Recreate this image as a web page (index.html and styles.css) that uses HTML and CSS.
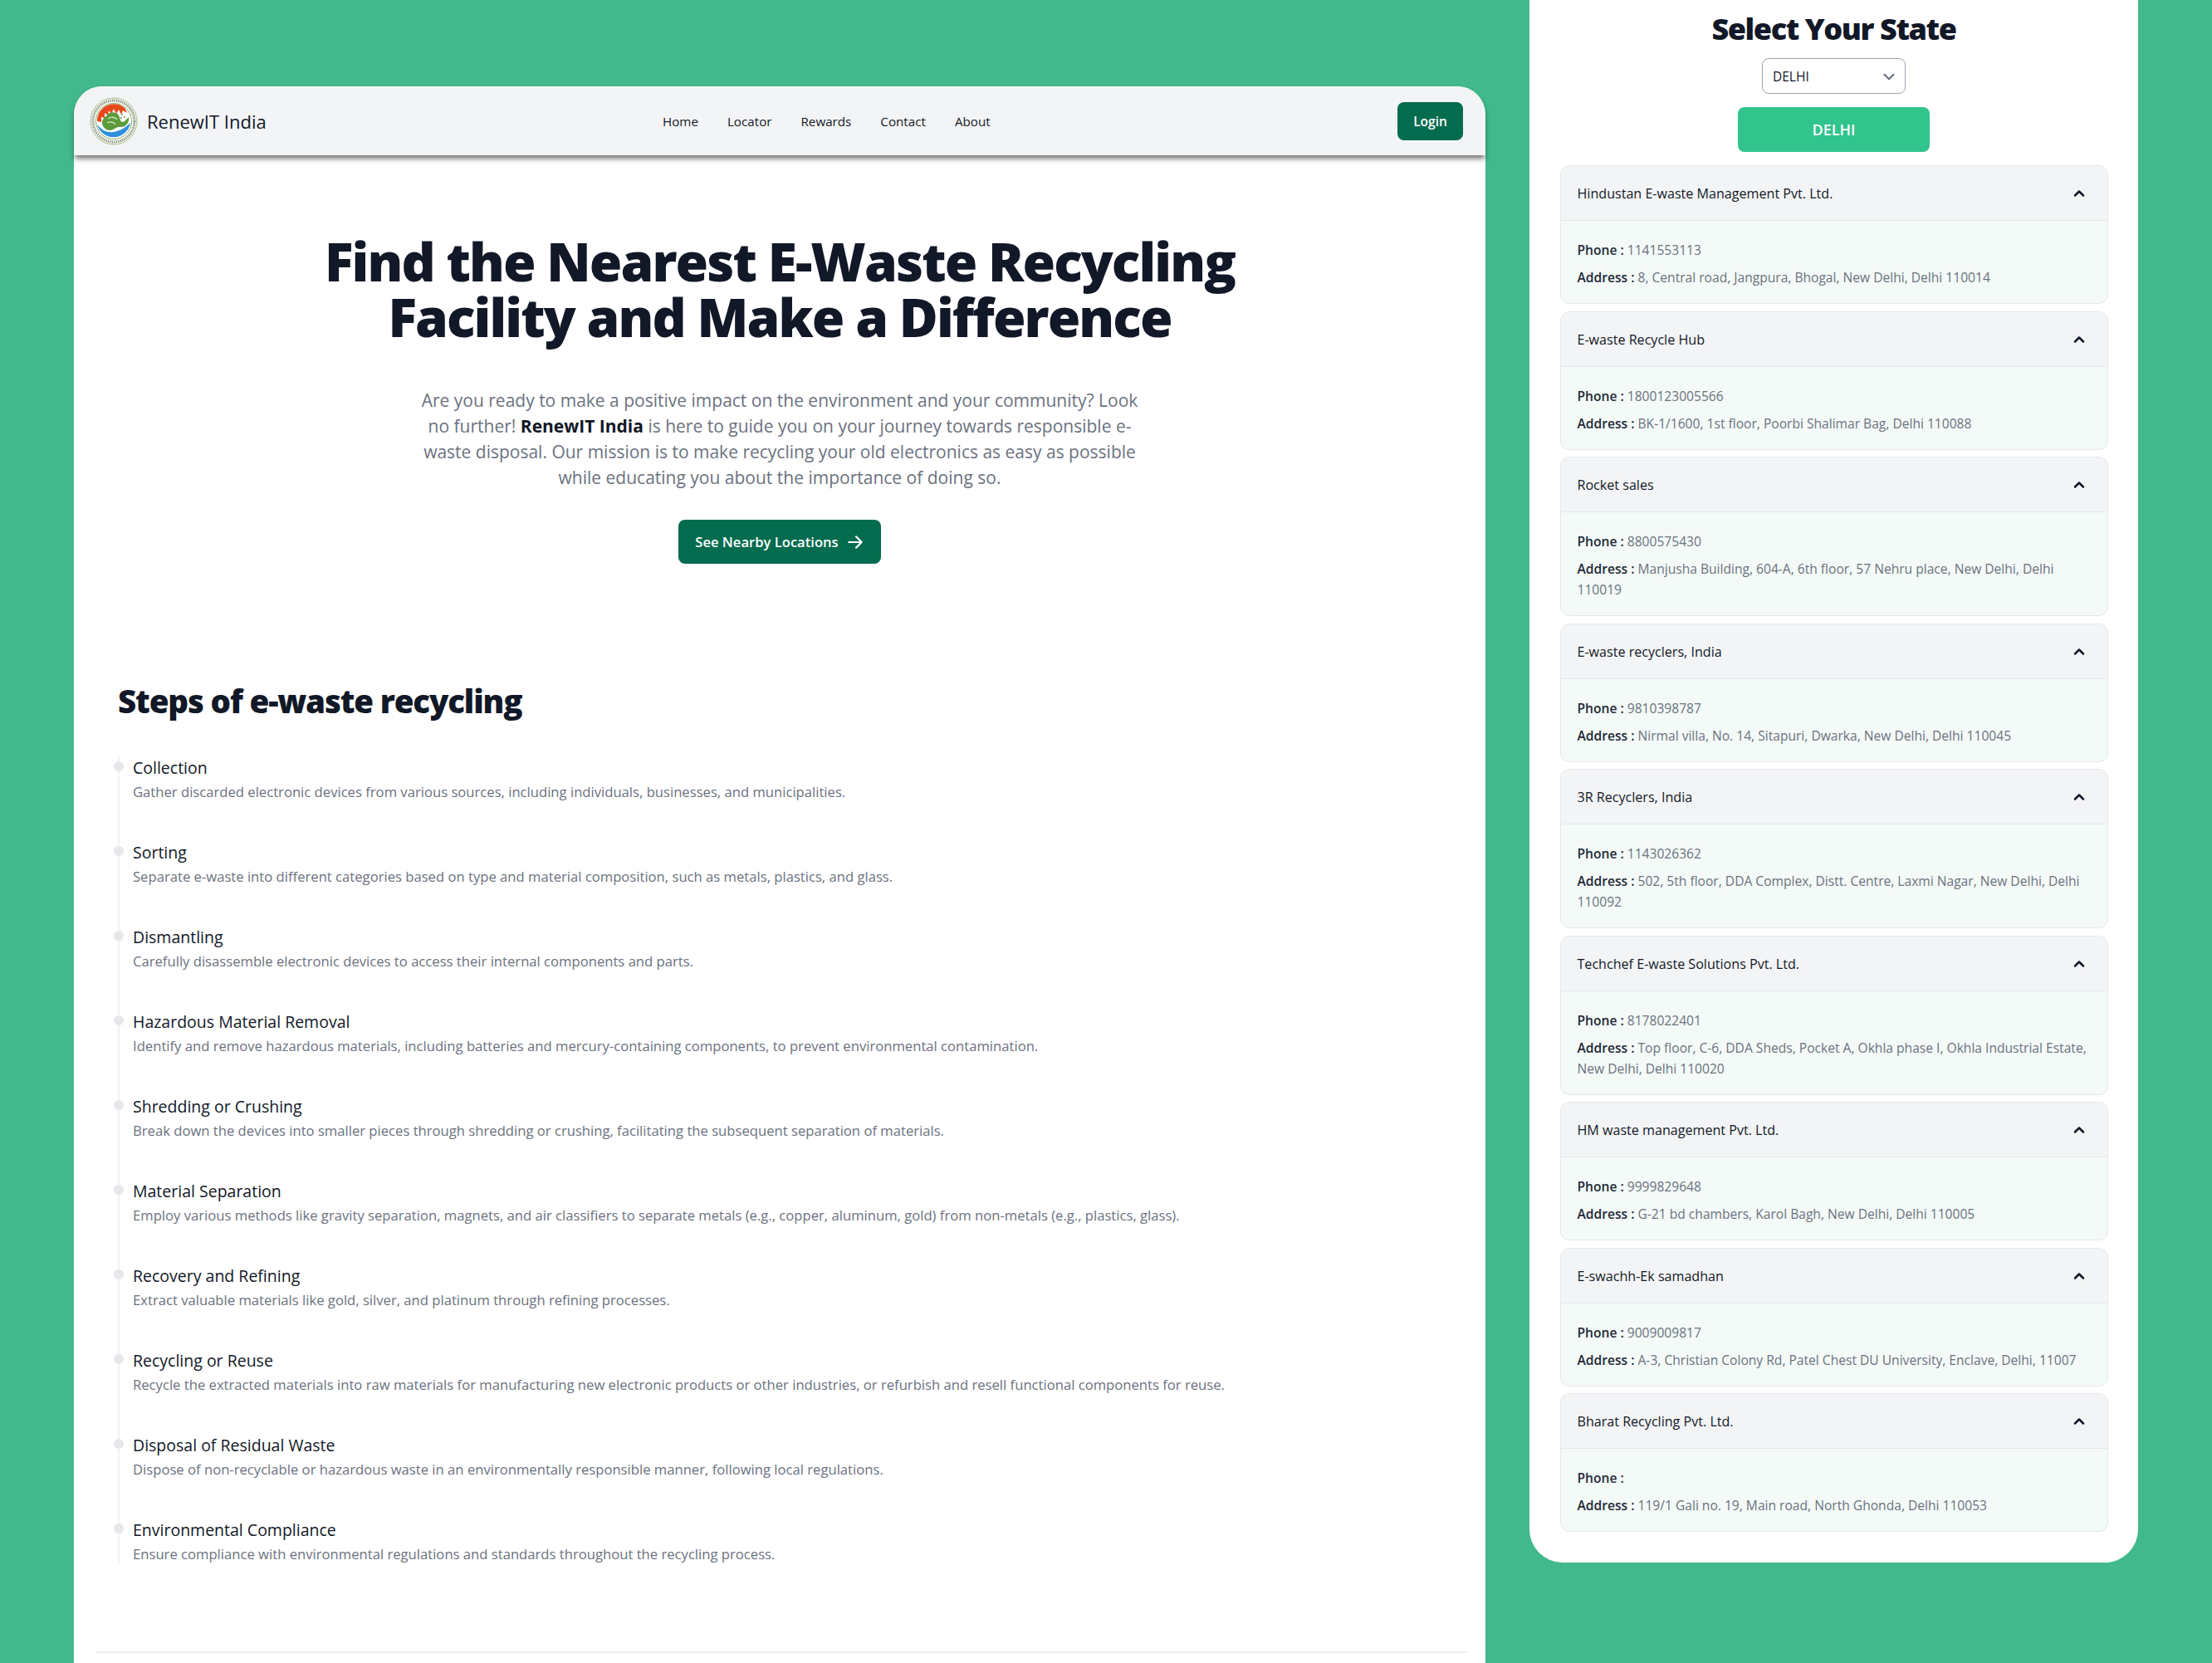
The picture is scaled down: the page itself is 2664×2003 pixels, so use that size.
FILE: index.html
```html
<!DOCTYPE html>
<html lang="en">
<head>
<meta charset="utf-8">
<title>RenewIT India</title>
<link rel="stylesheet" href="styles.css">
</head>
<body>
<div class="page">
  <main class="left">
    <nav class="navbar">
      <a class="brand">
        <svg class="logo" viewBox="0 0 60 64" aria-hidden="true">
          <circle cx="30" cy="32" r="28" fill="#f6f7f3" stroke="#a9c08e" stroke-width="1"/>
          <circle cx="30" cy="32" r="25" fill="none" stroke="#5f6b4c" stroke-width="3" stroke-dasharray="1.3 1.2" opacity=".75"/>
          <circle cx="30" cy="32" r="21.5" fill="#fff" stroke="#8fb070" stroke-width="1"/>
          <path d="M10 32 A20 20 0 0 1 44 17 L46 22 L41 19 L39 24 L36 18 L33 23 L30 17 L27 23 L24 19 L23 25 L19 22 L19 28 L15 27 L15 33 Z" fill="#e8481c"/>
          <path d="M10 36 C14 40 17 44 24 45 C32 46 42 42 50 34 A20.5 20.5 0 0 1 10 36 Z" fill="#2f8fdd"/>
          <path d="M17 38 C14 32 18 27 21 26 C24 20 33 20 36 25 C38 28 37 31 40 33 C43 33 46 29 48 27 C49 33 45 39 39 39 C34 38 31 42 26 43 C22 43 19 41 17 38 Z" fill="#5d9a3c"/>
          <path d="M23 29 C27 26 32 27 34 30 M22 34 C26 32 30 33 32 36" fill="none" stroke="#d7e8c0" stroke-width="1.3"/>
          <circle cx="40" cy="24" r="1" fill="#5d9a3c"/><circle cx="43" cy="27" r="1" fill="#5d9a3c"/><circle cx="39" cy="28" r="1" fill="#5d9a3c"/>
        </svg>
        <span class="brand-name">RenewIT India</span>
      </a>
      <ul class="nav-links">
        <li>Home</li><li>Locator</li><li>Rewards</li><li>Contact</li><li>About</li>
      </ul>
      <button class="btn btn-login">Login</button>
    </nav>

    <section class="hero">
      <h1>Find the Nearest E-Waste Recycling<br>Facility and Make a Difference</h1>
      <p>Are you ready to make a positive impact on the environment and your community? Look no further! <strong>RenewIT India</strong> is here to guide you on your journey towards responsible e-waste disposal. Our mission is to make recycling your old electronics as easy as possible while educating you about the importance of doing so.</p>
      <button class="btn btn-hero">See Nearby Locations
        <svg class="arrow" viewBox="0 0 20 20" aria-hidden="true"><path d="M3 10h14M11 4l6 6-6 6" fill="none" stroke="currentColor" stroke-width="2" stroke-linecap="round" stroke-linejoin="round"/></svg>
      </button>
    </section>

    <section class="steps">
      <h2>Steps of e-waste recycling</h2>
      <ol class="timeline">
        <li><h3>Collection</h3><p>Gather discarded electronic devices from various sources, including individuals, businesses, and municipalities.</p></li>
        <li><h3>Sorting</h3><p>Separate e-waste into different categories based on type and material composition, such as metals, plastics, and glass.</p></li>
        <li><h3>Dismantling</h3><p>Carefully disassemble electronic devices to access their internal components and parts.</p></li>
        <li><h3>Hazardous Material Removal</h3><p>Identify and remove hazardous materials, including batteries and mercury-containing components, to prevent environmental contamination.</p></li>
        <li><h3>Shredding or Crushing</h3><p>Break down the devices into smaller pieces through shredding or crushing, facilitating the subsequent separation of materials.</p></li>
        <li><h3>Material Separation</h3><p>Employ various methods like gravity separation, magnets, and air classifiers to separate metals (e.g., copper, aluminum, gold) from non-metals (e.g., plastics, glass).</p></li>
        <li><h3>Recovery and Refining</h3><p>Extract valuable materials like gold, silver, and platinum through refining processes.</p></li>
        <li><h3>Recycling or Reuse</h3><p>Recycle the extracted materials into raw materials for manufacturing new electronic products or other industries, or refurbish and resell functional components for reuse.</p></li>
        <li><h3>Disposal of Residual Waste</h3><p>Dispose of non-recyclable or hazardous waste in an environmentally responsible manner, following local regulations.</p></li>
        <li><h3>Environmental Compliance</h3><p>Ensure compliance with environmental regulations and standards throughout the recycling process.</p></li>
      </ol>
    </section>
    <hr class="rule">
  </main>

  <aside class="right">
    <h2 class="state-title">Select Your State</h2>
    <div class="select"><span>DELHI</span>
      <svg class="select-chev" viewBox="0 0 20 20" aria-hidden="true"><path d="M5 8l5 5 5-5" fill="none" stroke="#6b7280" stroke-width="2" stroke-linecap="round" stroke-linejoin="round"/></svg>
    </div>
    <div class="state-btn">DELHI</div>
    <div class="accordion">
      <article class="item"><header><span>Hindustan E-waste Management Pvt. Ltd.</span><svg class="chev" viewBox="0 0 20 20"><path d="M5 12.5l5-5 5 5" /></svg></header><div class="body"><p><b>Phone :</b> 1141553113</p><p><b>Address :</b> 8, Central road, Jangpura, Bhogal, New Delhi, Delhi 110014</p></div></article>
      <article class="item"><header><span>E-waste Recycle Hub</span><svg class="chev" viewBox="0 0 20 20"><path d="M5 12.5l5-5 5 5" /></svg></header><div class="body"><p><b>Phone :</b> 1800123005566</p><p><b>Address :</b> BK-1/1600, 1st floor, Poorbi Shalimar Bag, Delhi 110088</p></div></article>
      <article class="item"><header><span>Rocket sales</span><svg class="chev" viewBox="0 0 20 20"><path d="M5 12.5l5-5 5 5" /></svg></header><div class="body"><p><b>Phone :</b> 8800575430</p><p><b>Address :</b> Manjusha Building, 604-A, 6th floor, 57 Nehru place, New Delhi, Delhi 110019</p></div></article>
      <article class="item"><header><span>E-waste recyclers, India</span><svg class="chev" viewBox="0 0 20 20"><path d="M5 12.5l5-5 5 5" /></svg></header><div class="body"><p><b>Phone :</b> 9810398787</p><p><b>Address :</b> Nirmal villa, No. 14, Sitapuri, Dwarka, New Delhi, Delhi 110045</p></div></article>
      <article class="item"><header><span>3R Recyclers, India</span><svg class="chev" viewBox="0 0 20 20"><path d="M5 12.5l5-5 5 5" /></svg></header><div class="body"><p><b>Phone :</b> 1143026362</p><p><b>Address :</b> 502, 5th floor, DDA Complex, Distt. Centre, Laxmi Nagar, New Delhi, Delhi 110092</p></div></article>
      <article class="item"><header><span>Techchef E-waste Solutions Pvt. Ltd.</span><svg class="chev" viewBox="0 0 20 20"><path d="M5 12.5l5-5 5 5" /></svg></header><div class="body"><p><b>Phone :</b> 8178022401</p><p><b>Address :</b> Top floor, C-6, DDA Sheds, Pocket A, Okhla phase I, Okhla Industrial Estate, New Delhi, Delhi 110020</p></div></article>
      <article class="item"><header><span>HM waste management Pvt. Ltd.</span><svg class="chev" viewBox="0 0 20 20"><path d="M5 12.5l5-5 5 5" /></svg></header><div class="body"><p><b>Phone :</b> 9999829648</p><p><b>Address :</b> G-21 bd chambers, Karol Bagh, New Delhi, Delhi 110005</p></div></article>
      <article class="item"><header><span>E-swachh-Ek samadhan</span><svg class="chev" viewBox="0 0 20 20"><path d="M5 12.5l5-5 5 5" /></svg></header><div class="body"><p><b>Phone :</b> 9009009817</p><p><b>Address :</b> A-3, Christian Colony Rd, Patel Chest DU University, Enclave, Delhi, 11007</p></div></article>
      <article class="item"><header><span>Bharat Recycling Pvt. Ltd.</span><svg class="chev" viewBox="0 0 20 20"><path d="M5 12.5l5-5 5 5" /></svg></header><div class="body"><p><b>Phone :</b></p><p><b>Address :</b> 119/1 Gali no. 19, Main road, North Ghonda, Delhi 110053</p></div></article>
    </div>
  </aside>
</div>
</body>
</html>
```

FILE: styles.css
```css
* { box-sizing: border-box; }
html, body { margin: 0; padding: 0; }
body {
  background: #41b98c;
  font-family: "Open Sans", "Noto Sans", sans-serif;
  font-stretch: 90%;
  color: #111827;
  overflow: hidden;
}
h1, h2, h3, p, ul, ol { margin: 0; padding: 0; }
ul, ol { list-style: none; }

.page {
  display: flex;
  align-items: flex-start;
  gap: 53px;
  height: 2003px;
  padding-left: 89px;
  overflow: hidden;
}

.left {
  width: 1700px;
  height: 1899px;
  margin-top: 104px;
  background: #fff;
  border-radius: 34px 34px 0 0;
  display: flex;
  flex-direction: column;
}

.navbar {
  height: 83px;
  flex: none;
  display: flex;
  justify-content: space-between;
  align-items: center;
  padding: 0 27px 0 18px;
  background: #f3f4f6;
  border-radius: 34px 34px 0 0;
  box-shadow: 0 5px 6px -1px rgba(0, 0, 0, .55);
}
.brand { display: flex; align-items: center; gap: 10px; }
.logo { width: 60px; height: 64px; }
.brand-name { font-size: 22px; color: #111827; }
.nav-links { display: flex; gap: 35px; font-size: 15.2px; font-weight: 500; color: #111827; margin-left: -13px; }
.btn {
  border: 0;
  font-family: inherit;
  font-stretch: inherit;
  color: #fff;
  background: #046c4e;
  font-weight: 600;
  border-radius: 8px;
}
.btn-login { width: 79px; height: 46px; font-size: 15.5px; }

.hero { display: flex; flex-direction: column; align-items: center; padding-top: 94px; }
.hero h1 {
  font-size: 64px;
  line-height: 67px;
  font-weight: 800;
  letter-spacing: -1.9px;
  text-align: center;
  color: #111827;
}
.hero p {
  width: 880px;
  margin-top: 52px;
  font-size: 21px;
  line-height: 31px;
  color: #6b7280;
  text-align: center;
}
.hero strong { color: #111827; font-weight: 700; }
.btn-hero {
  display: flex;
  align-items: center;
  justify-content: center;
  gap: 9px;
  width: 244px;
  height: 53px;
  margin-top: 35px;
  font-size: 16.6px;
}
.arrow { width: 22px; height: 22px; }

.steps { padding: 0 0 0 53px; margin-top: 138px; }
.steps h2 { font-size: 38.5px; line-height: 54px; font-weight: 800; letter-spacing: -1.15px; color: #111827; }
.timeline { margin-top: 38px; border-left: 2px solid #f0f1f4; }
.timeline li { position: relative; height: 102px; padding: 1px 0 0 16px; }
.timeline li:last-child { height: 56px; }
.timeline li::before {
  content: "";
  position: absolute;
  left: -7px;
  top: 8px;
  width: 12px;
  height: 12px;
  border-radius: 50%;
  background: #e5e7eb;
}
.timeline h3 { font-size: 19.5px; line-height: 30px; font-weight: 500; color: #111827; }
.timeline p { font-size: 16.65px; line-height: 27px; color: #6b7280; }
.rule { border: 0; border-top: 2px solid #eceef0; margin: 106px 21px 0 26px; }

.right {
  width: 733px;
  height: 1882px;
  flex: none;
  padding: 0 37px;
  background: #fff;
  border-radius: 0 0 40px 40px;
  display: flex;
  flex-direction: column;
  align-items: center;
}
.state-title { font-size: 36px; line-height: 50px; font-weight: 800; letter-spacing: -1.4px; margin-top: 10px; color: #111827; }
.select {
  width: 173px;
  height: 43px;
  margin-top: 10px;
  padding: 0 8px 0 12px;
  display: flex;
  align-items: center;
  justify-content: space-between;
  border: 1px solid #9ca3af;
  border-radius: 8px;
  font-size: 15.5px;
  color: #111827;
}
.select-chev { width: 22px; height: 22px; }
.state-btn {
  width: 231px;
  height: 54px;
  margin-top: 16px;
  display: flex;
  align-items: center;
  justify-content: center;
  background: #31c48d;
  border-radius: 8px;
  color: #fff;
  font-weight: 600;
  font-size: 18px;
}
.accordion { width: 660px; margin-top: 16px; display: flex; flex-direction: column; gap: 8.5px; }
.item { border: 1px solid #e5e7eb; border-radius: 11px; overflow: hidden; background: #f3faf7; }
.item header {
  height: 66px;
  display: flex;
  align-items: center;
  justify-content: space-between;
  padding: 1px 24px 0 20px;
  background: #f3f4f6;
  border-bottom: 1px solid #e5e7eb;
  font-size: 16.1px;
  font-weight: 500;
  color: #111827;
}
.chev { width: 20px; height: 20px; fill: none; stroke: #111827; stroke-width: 2.5; stroke-linecap: round; stroke-linejoin: round; }
.body { padding: 23px 20px 18px; font-size: 15.6px; line-height: 25px; color: #6b7280; }
.body p + p { margin-top: 8px; }
.body b { font-weight: 550; color: #1f2937; }
```
